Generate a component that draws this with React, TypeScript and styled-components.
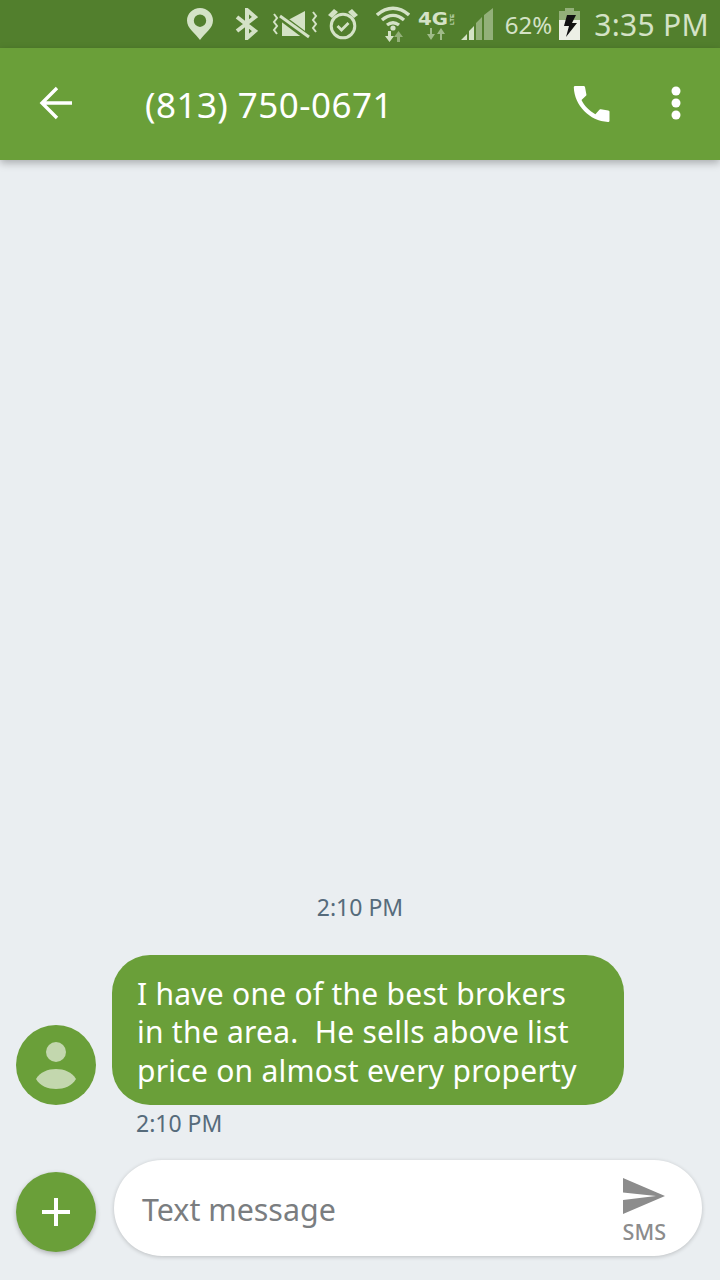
import styled, { createGlobalStyle } from "styled-components";

const GlobalStyle = createGlobalStyle`
  html, body {
    margin: 0;
    padding: 0;
    background: #eaeef1;
  }
  * {
    box-sizing: border-box;
  }
`;

const Screen = styled.div`
  display: flex;
  flex-direction: column;
  width: 720px;
  height: 1280px;
  overflow: hidden;
  background: #eaeef1;
  font-family: "Noto Sans", "Open Sans", sans-serif;
`;

const StatusBar = styled.div`
  display: flex;
  align-items: center;
  justify-content: flex-end;
  height: 48px;
  padding-right: 11px;
  background: #527f2d;
  color: #d4e2c6;
`;

const StatusIcon = styled.svg<{ $gap?: number }>`
  display: block;
  flex: none;
  margin-right: ${(p) => p.$gap ?? 0}px;
`;

const Battery = styled.span`
  font-size: 24px;
  letter-spacing: 0;
  margin-right: 7px;
`;

const Clock = styled.span`
  font-size: 30px;
  letter-spacing: 0.3px;
  margin-left: 14px;
`;

const Toolbar = styled.header`
  position: relative;
  z-index: 1;
  display: flex;
  align-items: center;
  height: 112px;
  padding: 0 39px 0 39px;
  background: #6a9f39;
  box-shadow: 0 3px 8px rgba(0, 0, 0, 0.28);
  color: #fff;
`;

const Title = styled.h1`
  flex: 1;
  margin: 0 0 0 72px;
  font-size: 35px;
  font-weight: 400;
  letter-spacing: 0.45px;
`;

const ToolbarIcon = styled.svg<{ $gap?: number }>`
  display: block;
  flex: none;
  margin: 0 ${(p) => p.$gap ?? 0}px 2px 0;
`;

const Thread = styled.main`
  flex: 1;
  display: flex;
  flex-direction: column;
  justify-content: flex-end;
  padding: 0 16px 21px;
`;

const DateStamp = styled.div`
  margin-bottom: 32px;
  text-align: center;
  font-size: 23px;
  line-height: 32px;
  color: #566b7b;
`;

const MessageRow = styled.div`
  display: flex;
  align-items: flex-end;
  gap: 16px;
`;

const Avatar = styled.div`
  display: flex;
  align-items: center;
  justify-content: center;
  width: 80px;
  height: 80px;
  border-radius: 50%;
  background: #6a9f39;
`;

const Bubble = styled.div`
  width: 512px;
  padding: 19.500px 24px 15px 25px;
  border-radius: 38px;
  background: #6a9f39;
  color: #fff;
  font-size: 30px;
  letter-spacing: 0.25px;
  line-height: 38.500px;
  white-space: pre;
`;

const MessageTime = styled.div`
  margin: 2px 0 0 120px;
  font-size: 23px;
  line-height: 32px;
  color: #566b7b;
`;

const Composer = styled.footer`
  display: flex;
  align-items: center;
  gap: 18px;
  height: 96px;
  margin: 0 18px 24px 16px;
`;

const AddButton = styled.button`
  display: flex;
  align-items: center;
  justify-content: center;
  flex: none;
  width: 80px;
  height: 80px;
  margin-top: 8px;
  padding: 0;
  border: 0;
  border-radius: 50%;
  background: #6a9f39;
  box-shadow: 0 2px 5px rgba(0, 0, 0, 0.25);
`;

const InputPill = styled.div`
  flex: 1;
  display: flex;
  align-items: center;
  justify-content: space-between;
  height: 96px;
  padding: 0 36px 0 28px;
  border-radius: 48px;
  background: #fff;
  box-shadow: 0 1px 4px rgba(0, 0, 0, 0.2);
`;

const Placeholder = styled.span`
  margin-top: 2px;
  font-size: 30.400px;
  color: #7a7d80;
`;

const SendButton = styled.div`
  display: flex;
  flex-direction: column;
  align-items: center;
  gap: 6px;
  margin-top: 5px;
  color: #8c8c8c;
  font-size: 21.500px;
  font-weight: 500;
  line-height: 24px;
`;

export default function App() {
  return (
    <Screen>
      <GlobalStyle />
      <StatusBar>
        <StatusIcon $gap={22} width="26" height="32" viewBox="0 0 26 32">
          <path
            fillRule="evenodd"
            fill="#d4e2c6"
            d="M13 0C5.800 0 0 5.600 0 12.600 0 20.500 8 25 13 32c5-7 13-11.500 13-19.400C26 5.600 20.200 0 13 0zm0 6.500a6.200 6.200 0 1 1 0 12.400 6.200 6.200 0 0 1 0-12.400z"
          />
        </StatusIcon>
        <StatusIcon $gap={14} width="23" height="32" viewBox="0 0 23 32">
          <path
            fill="none"
            stroke="#d4e2c6"
            strokeWidth="4"
            d="M2 9l18 14-8 7V2l8 7L2 23"
          />
        </StatusIcon>
        <StatusIcon $gap={10} width="46" height="30" viewBox="0 0 46 30">
          <path fill="#d4e2c6" d="M10 10h8L33 2v25H10z" />
          <path stroke="#527f2d" strokeWidth="7" d="M6 6l32 24" />
          <path stroke="#d4e2c6" strokeWidth="3" d="M8 7l29 21" />
          <path
            fill="none"
            stroke="#d4e2c6"
            strokeWidth="2"
            d="M2 5l3 4-3 4 3 4-3 4 3 4M41 3l3 4-3 4 3 4-3 4 3 4"
          />
        </StatusIcon>
        <StatusIcon $gap={18} width="30" height="32" viewBox="0 0 30 32">
          <circle cx="15" cy="18" r="11.800" fill="none" stroke="#d4e2c6" strokeWidth="3" />
          <path fill="none" stroke="#d4e2c6" strokeWidth="2.800" d="M9.500 18l4 4 7-7" />
          <path fill="#d4e2c6" d="M0 7l6-6 4 3-6 6zM30 7l-6-6-4 3 6 6z" />
        </StatusIcon>
        <StatusIcon $gap={8} width="34" height="36" viewBox="0 0 34 36">
          <path
            fill="none"
            stroke="#d4e2c6"
            strokeWidth="3.400"
            d="M1 9c10-9 22-9 32 0M6 14c7-6 15-6 22 0M11 19c4-3 8-3 12 0"
          />
          <circle cx="17" cy="22" r="2.600" fill="#d4e2c6" />
          <path fill="#d4e2c6" d="M12 25h3v5h3l-4.500 6L9 30h3z" />
          <path fill="#d4e2c6" opacity="0.5" d="M21 36v-5h-3l4.500-6 4.500 6h-3v5z" />
        </StatusIcon>
        <StatusIcon $gap={6} width="37" height="32" viewBox="0 0 37 32">
          <text
            x="0"
            y="17"
            fill="#d4e2c6"
            fontFamily="'DejaVu Sans', sans-serif"
            fontSize="18"
            fontWeight="700"
            textLength="30"
            lengthAdjust="spacingAndGlyphs"
          >
            4G
          </text>
          <text
            x="0"
            y="0"
            transform="translate(36 17) rotate(-90)"
            fill="#d4e2c6"
            fontFamily="'Liberation Sans', sans-serif"
            fontSize="6"
            fontWeight="700"
          >
            LTE
          </text>
          <path fill="#d4e2c6" opacity="0.6" d="M14 20v6h3l-4 6-4-6h3v-6zM22 32v-6h-3l4-6 4 6h-3v6z" />
        </StatusIcon>
        <StatusIcon $gap={12} width="32" height="32" viewBox="0 0 32 32">
          <path fill="#d4e2c6" d="M0 32l6-6v6zM8 32V23l5-5v14z" />
          <path fill="#d4e2c6" opacity="0.5" d="M15 32V15l6-6v23zM23 32V7l9-7v32z" />
        </StatusIcon>
        <Battery>62%</Battery>
        <StatusIcon width="21" height="32" viewBox="0 0 21 32">
          <path fill="#d4e2c6" opacity="0.5" d="M6 0h9v3h6v9H0V3h6z" />
          <path fill="#ecefe6" d="M0 12h21v20H0z" />
          <path fill="#111" d="M8 7h9l-4 8h5L7 29l3-11H5z" />
        </StatusIcon>
        <Clock>3:35 PM</Clock>
      </StatusBar>

      <Toolbar>
        <ToolbarIcon width="34" height="34" viewBox="0 0 34 34">
          <path fill="none" stroke="#fff" strokeWidth="3.400" d="M33 17H4M18 2L3 17l15 15" />
        </ToolbarIcon>
        <Title>(813) 750-0671</Title>
        <ToolbarIcon $gap={59} width="40" height="40" viewBox="0 0 40 40">
          <path
            fill="#fff"
            d="M3 3c-.6 0-1.200.6-1.200 1.300C2.500 22.500 17.500 38 36 39c.8 0 1.500-.6 1.500-1.300v-9c0-.7-.5-1.200-1.200-1.300l-7.500-1.200c-.5 0-1 .1-1.400.5l-4 4.500C17 27.500 12 22.500 9.500 17l4.500-4.200c.4-.4.500-.9.400-1.400L13 3.900C12.800 3.300 12.300 3 11.700 3z"
          />
        </ToolbarIcon>
        <ToolbarIcon width="10" height="34" viewBox="0 0 10 34">
          <circle cx="5" cy="5" r="4.500" fill="#fff" />
          <circle cx="5" cy="17" r="4.500" fill="#fff" />
          <circle cx="5" cy="29" r="4.500" fill="#fff" />
        </ToolbarIcon>
      </Toolbar>

      <Thread>
        <DateStamp>2:10 PM</DateStamp>
        <MessageRow>
          <Avatar>
            <svg width="40" height="48" viewBox="0 0 40 48">
              <circle cx="20" cy="11" r="10" fill="#c3d7ae" />
              <path fill="#c3d7ae" d="M0 38c4-7 12-10 20-10s16 3 20 10c-4 7-12 10-20 10S4 45 0 38z" />
            </svg>
          </Avatar>
          <Bubble>
            {"I have one of the best brokers\nin the area.  He sells above list\nprice on almost every property"}
          </Bubble>
        </MessageRow>
        <MessageTime>2:10 PM</MessageTime>
      </Thread>

      <Composer>
        <AddButton>
          <svg width="30" height="30" viewBox="0 0 30 30">
            <path stroke="#fff" strokeWidth="4" d="M15 1v28M1 15h28" />
          </svg>
        </AddButton>
        <InputPill>
          <Placeholder>Text message</Placeholder>
          <SendButton>
            <svg width="42" height="36" viewBox="0 0 42 36">
              <path fill="#8c8c8c" d="M0 0l42 18L0 36V22l33-4L0 14.500z" />
            </svg>
            SMS
          </SendButton>
        </InputPill>
      </Composer>
    </Screen>
  );
}
